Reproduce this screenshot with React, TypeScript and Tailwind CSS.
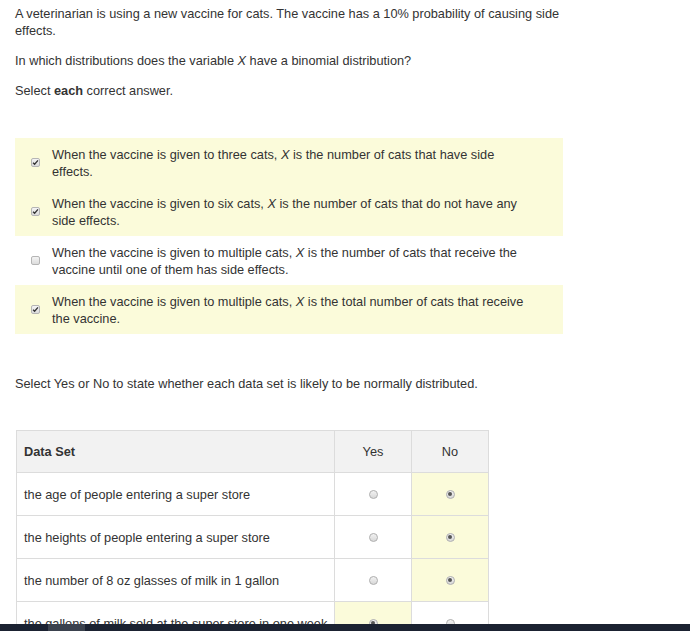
import React from 'react'

const options = [
  { pre: 'When the vaccine is given to three cats, ', post: ' is the number of cats that have side effects.', checked: true },
  { pre: 'When the vaccine is given to six cats, ', post: ' is the number of cats that do not have any side effects.', checked: true },
  { pre: 'When the vaccine is given to multiple cats, ', post: ' is the number of cats that receive the vaccine until one of them has side effects.', checked: false },
  { pre: 'When the vaccine is given to multiple cats, ', post: ' is the total number of cats that receive the vaccine.', checked: true },
]

const rows = [
  { label: 'the age of people entering a super store', yes: false },
  { label: 'the heights of people entering a super store', yes: false },
  { label: 'the number of 8 oz glasses of milk in 1 gallon', yes: false },
  { label: 'the gallons of milk sold at the super store in one week', yes: true },
]

function Check({ checked }: { checked: boolean }) {
  return (
    <span className="flex h-[9px] w-[9px] flex-shrink-0 items-center justify-center rounded-[2px] border border-[#b5b5b5] bg-gradient-to-b from-[#f4f4f4] to-[#dcdcdc]">
      {checked && (
        <svg width="7" height="7" viewBox="0 0 8 8">
          <path d="M1.2 4.2 L3 6 L6.8 1.6" fill="none" stroke="#333" strokeWidth="1.5" />
        </svg>
      )}
    </span>
  )
}

function Radio({ on }: { on: boolean }) {
  return (
    <span className="mx-auto flex h-[9px] w-[9px] items-center justify-center rounded-full border border-[#b0b0b0] bg-gradient-to-b from-[#f2f2f2] to-[#d8d8d8]">
      {on && <span className="h-[4px] w-[4px] rounded-full bg-[#555]" />}
    </span>
  )
}

export default function App() {
  return (
    <div className="relative h-[631px] w-[690px] overflow-hidden bg-white font-['Liberation_Sans',Arial,sans-serif] text-[12.75px] leading-[17px] text-[#333]">
      <div className="px-[15px] pt-[5px]">
        <p className="w-[560px]">
          A veterinarian is using a new vaccine for cats. The vaccine has a 10% probability of causing side effects.
        </p>
        <p className="mt-[13px]">
          In which distributions does the variable <i>X</i> have a binomial distribution?
        </p>
        <p className="mt-[13px]">
          Select <b className="font-semibold">each</b> correct answer.
        </p>

        <div className="mt-[39px] w-[548px]">
          {options.map((o, i) => (
            <div
              key={i}
              className={`flex h-[49px] items-center gap-[12px] pl-[16px] ${o.checked ? 'bg-[#fbfbda]' : 'bg-white'}`}
            >
              <Check checked={o.checked} />
              <span className="w-[480px]">
                {o.pre}
                <i>X</i>
                {o.post}
              </span>
            </div>
          ))}
        </div>

        <p className="mt-[41px]">Select Yes or No to state whether each data set is likely to be normally distributed.</p>

        <table className="ml-px mt-[38px] w-[473px] border-collapse">
          <thead>
            <tr className="h-[42px] bg-[#f2f2f2]">
              <th className="w-[318px] border border-[#dcdcdc] pl-[7px] text-left font-semibold">Data Set</th>
              <th className="w-[77px] border border-[#dcdcdc] font-normal">Yes</th>
              <th className="w-[77px] border border-[#dcdcdc] font-normal">No</th>
            </tr>
          </thead>
          <tbody>
            {rows.map((r, i) => (
              <tr key={i} className="h-[43px]">
                <td className="border border-[#dcdcdc] pl-[7px]">{r.label}</td>
                <td className={`border border-[#dcdcdc] ${r.yes ? 'bg-[#fbfbda]' : ''}`}>
                  <Radio on={r.yes} />
                </td>
                <td className={`border border-[#dcdcdc] ${!r.yes ? 'bg-[#fbfbda]' : ''}`}>
                  <Radio on={!r.yes} />
                </td>
              </tr>
            ))}
          </tbody>
        </table>
      </div>

      <div className="absolute bottom-0 left-0 flex h-[7px] w-full bg-[#1b2231]">
        <div className="ml-[48px] h-full w-[37px] bg-[#3b424e]" />
      </div>
    </div>
  )
}
